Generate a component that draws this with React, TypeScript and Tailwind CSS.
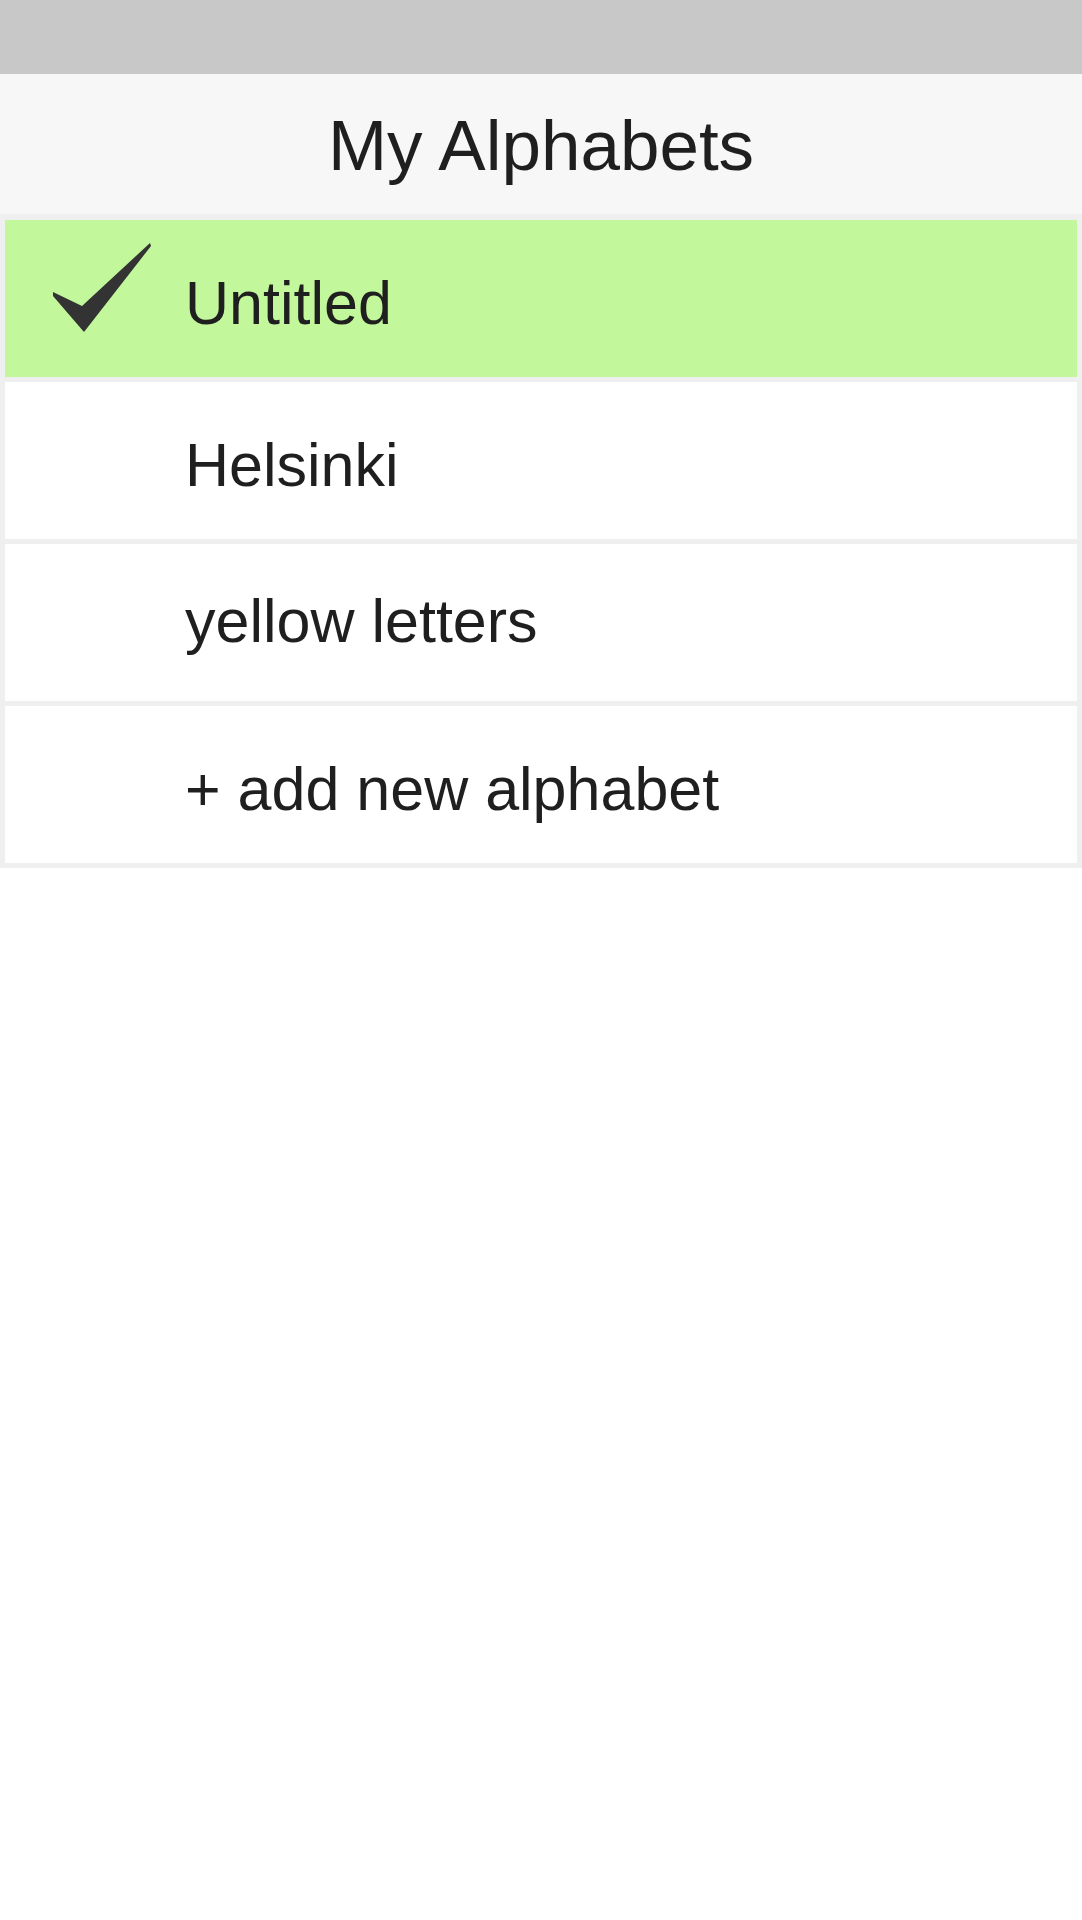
import React from 'react';

const ALPHABETS = [
  { id: 'untitled', name: 'Untitled', selected: true, raised: false },
  { id: 'helsinki', name: 'Helsinki', selected: false, raised: false },
  { id: 'yellow', name: 'yellow letters', selected: false, raised: true },
  { id: 'add', name: '+ add new alphabet', selected: false, raised: false },
];

function CheckMark() {
  return (
    <svg width="105" height="95" viewBox="0 0 105 95" className="block">
      <polygon points="3,52 32,66 100,3 101,6 34,92 3,56" fill="#333333" />
    </svg>
  );
}

function AlphabetRow({ name, selected, raised }: { name: string; selected: boolean; raised: boolean }) {
  return (
    <div
      className={`flex h-[157px] items-center ${selected ? 'bg-[#c3f79c]' : 'bg-white'}`}
    >
      <div className="flex h-full w-[180px] shrink-0 items-start pl-[45px] pt-[20px]">
        {selected && <CheckMark />}
      </div>
      <span className={`${raised ? 'mt-[-2px]' : 'mt-[10px]'} text-[61px] text-[#1f1f1f]`}>{name}</span>
    </div>
  );
}

export default function App() {
  return (
    <div
      className="min-h-[1920px] bg-white"
      style={{ fontFamily: '"Liberation Sans", Arial, sans-serif' }}
    >
      {/* status bar */}
      <div className="h-[74px] bg-[#c8c8c8]" />

      {/* title */}
      <div className="flex h-[140px] items-center justify-center bg-[#f7f7f7]">
        <h1 className="pt-[5px] text-[71px] font-normal text-[#1f1f1f]">My Alphabets</h1>
      </div>

      {/* list */}
      <div className="flex flex-col gap-[5px] bg-[#efefef] px-[5px] pt-[6px] pb-[5px]">
        {ALPHABETS.map(a => (
          <AlphabetRow key={a.id} name={a.name} selected={a.selected} raised={a.raised} />
        ))}
      </div>
    </div>
  );
}
